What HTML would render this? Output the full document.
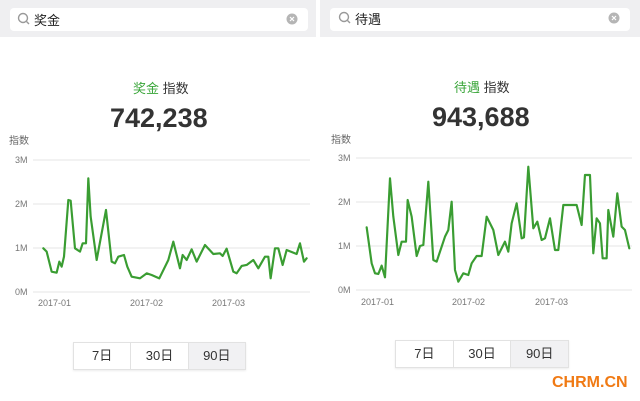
<!DOCTYPE html>
<html><head><meta charset="utf-8"><style>
body{margin:0;width:640px;height:401px;background:#fff;position:relative;overflow:hidden;font-family:"Liberation Sans","Noto Sans CJK SC",sans-serif}
.bar{position:absolute;top:0;height:37px;background:#efeff1}
.sb{position:absolute;top:8px;height:23px;background:#fff;border-radius:4px}
.t{position:absolute;white-space:nowrap}
.btns{position:absolute;height:26px;border:1px solid #e2e2e2;display:flex;font-size:13px;color:#333;box-shadow:0 1px 2px rgba(0,0,0,.08)}
.btns div{flex:1;text-align:center;line-height:26px;border-right:1px solid #e2e2e2}
.btns div:last-child{border:none;background:#f1f1f3}
</style></head><body>
<div class="bar" style="left:0;width:316px"></div>
<div class="bar" style="left:320px;width:320px"></div>
<div class="sb" style="left:10px;width:298px"></div>
<div class="sb" style="left:330px;width:300px"></div>
<svg width="640" height="401" style="position:absolute;left:0;top:0">
<g fill="none" stroke="#999" stroke-width="1.4"><circle cx="23" cy="18" r="4.5"/><line x1="26.5" y1="21.5" x2="29" y2="24"/><circle cx="344" cy="17" r="4.5"/><line x1="347.5" y1="20.5" x2="350" y2="23"/></g>
<circle cx="292" cy="19" r="5.5" fill="#b5b5b5"/><circle cx="614" cy="18" r="5.5" fill="#b5b5b5"/>
<g stroke="#fff" stroke-width="1.2"><path d="M290 17l4 4M294 17l-4 4M612 16l4 4M616 16l-4 4"/></g>
<g stroke="#e4e4e6" stroke-width="1"><path d="M33 160H310M33 204H310M33 248H310M33 292H310M356 158H632M356 202H632M356 246H632M356 290H632"/></g>
<g transform="translate(0,150) scale(0.3333)" fill="none" stroke="#3a9d32" stroke-width="6.5" stroke-linejoin="round" stroke-linecap="round"><polyline points="130,295 140,305 155,365 170,368 178,335 185,350 192,320 205,150 212,152 225,295 240,305 248,280 258,280 265,85 272,200 290,330 318,180 335,335 345,340 355,320 372,315 382,350 395,380 420,385 440,370 455,375 478,385 505,330 520,275 540,355 548,315 560,330 575,298 590,335 615,285 640,312 660,310 668,318 680,296 700,365 710,370 725,348 740,345 760,330 775,355 795,320 805,320 812,385 825,295 835,295 848,345 860,300 890,312 900,280 912,335 920,325"/></g>
<g transform="translate(320,150) scale(0.3333)" fill="none" stroke="#3a9d32" stroke-width="6.5" stroke-linejoin="round" stroke-linecap="round"><polyline points="140,232 155,340 165,370 175,372 185,347 195,382 210,85 220,200 235,315 245,275 258,275 263,150 275,200 290,318 300,288 310,285 325,95 340,330 350,335 365,290 375,260 385,240 395,155 405,360 415,395 430,370 445,375 455,340 470,318 485,318 500,200 520,240 535,315 555,275 565,305 575,220 590,160 605,265 612,262 625,50 640,235 652,215 665,270 675,265 690,205 705,300 715,300 730,165 770,165 785,225 795,75 810,75 820,310 830,205 840,220 848,325 860,325 865,180 880,260 892,130 905,230 915,240 928,295"/></g>
</svg>
<div class="t" style="left:34px;top:10px;font-size:13px;color:#222">奖金</div>
<div class="t" style="left:355px;top:9px;font-size:13px;color:#222">待遇</div>
<div class="t" style="left:133px;top:78px;font-size:13px;color:#333"><span style="color:#3aa63a">奖金</span> 指数</div>
<div class="t" style="left:454px;top:77px;font-size:13px;color:#333"><span style="color:#3aa63a">待遇</span> 指数</div>
<div class="t" style="left:110px;top:103px;font-size:27px;font-weight:bold;color:#333">742,238</div>
<div class="t" style="left:432px;top:102px;font-size:27px;font-weight:bold;color:#333">943,688</div>
<div class="t" style="left:9px;top:132px;font-size:10px;color:#666">指数</div>
<div class="t" style="left:331px;top:131px;font-size:10px;color:#666">指数</div>
<div style="font-size:9px;color:#777">
<div class="t" style="left:15px;top:155px">3M</div><div class="t" style="left:15px;top:199px">2M</div><div class="t" style="left:15px;top:243px">1M</div><div class="t" style="left:15px;top:287px">0M</div>
<div class="t" style="left:338px;top:153px">3M</div><div class="t" style="left:338px;top:197px">2M</div><div class="t" style="left:338px;top:241px">1M</div><div class="t" style="left:338px;top:285px">0M</div>
<div class="t" style="left:38px;top:298px">2017-01</div><div class="t" style="left:130px;top:298px">2017-02</div><div class="t" style="left:212px;top:298px">2017-03</div>
<div class="t" style="left:361px;top:297px">2017-01</div><div class="t" style="left:452px;top:297px">2017-02</div><div class="t" style="left:535px;top:297px">2017-03</div>
</div>
<div class="btns" style="left:73px;top:342px;width:171px"><div>7日</div><div>30日</div><div>90日</div></div>
<div class="btns" style="left:395px;top:340px;width:172px"><div>7日</div><div>30日</div><div>90日</div></div>
<div class="t" style="left:552px;top:374px;font-size:16px;font-weight:bold;color:#f07a14">CHRM.CN</div>
</body></html>
